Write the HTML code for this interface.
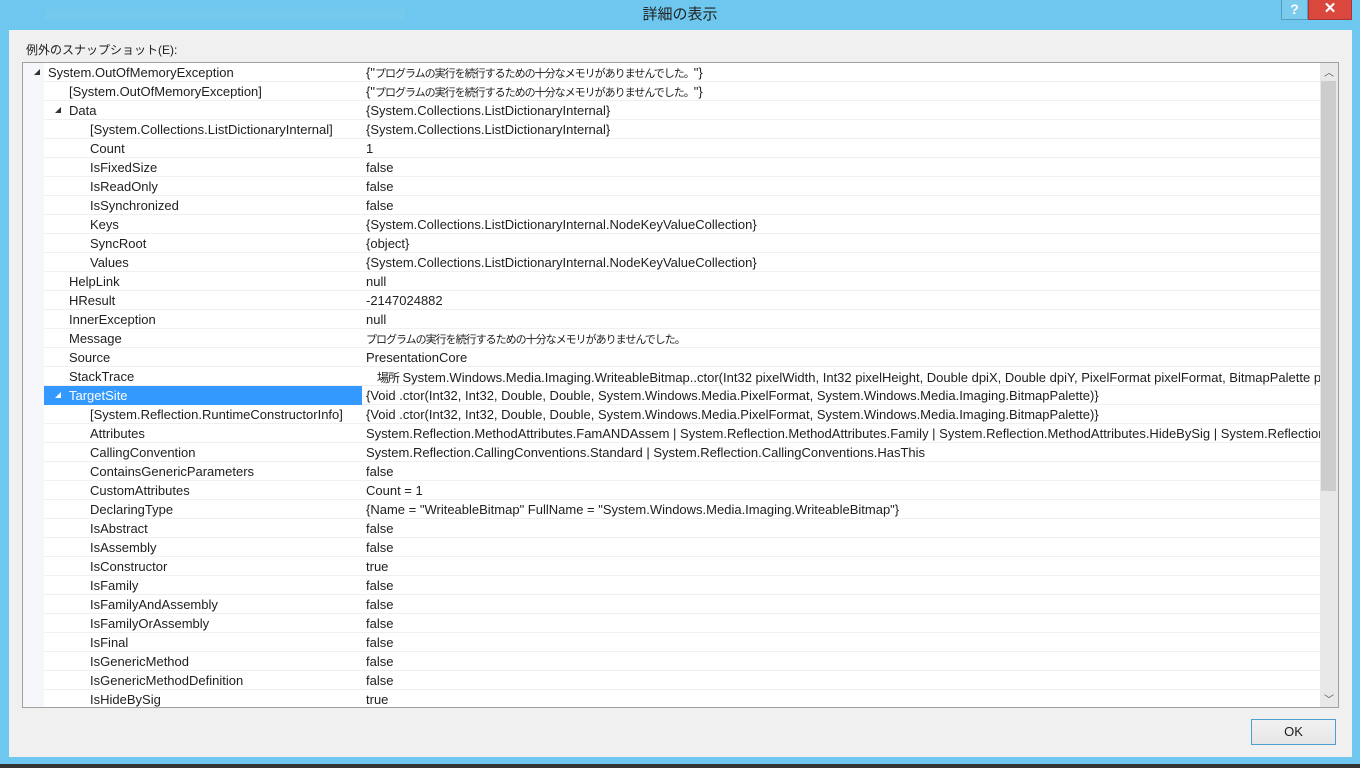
<!DOCTYPE html>
<html><head><meta charset="utf-8"><style>
*{margin:0;padding:0;box-sizing:border-box}
body{width:1360px;height:768px;overflow:hidden;background:#6dc7ee;font-family:"Liberation Sans","Noto Sans CJK JP",sans-serif;font-size:13px;color:#1e1e1e;position:relative}
.title{position:absolute;top:0;left:0;width:1360px;height:30px;text-align:center;line-height:30px;font-size:15px;color:#222}
.ghost{position:absolute;top:9px;left:45px;width:360px;height:12px;background:#7acbec;opacity:.6}
.help{position:absolute;left:1281px;top:0;width:27px;height:20px;background:#7ccbec;border:1px solid #4f9fc4;border-top:none;text-align:center;color:#fff;font-weight:bold;font-size:14px;line-height:18px}
.close{position:absolute;left:1308px;top:0;width:44px;height:20px;background:#d9473d;border:1px solid #a33;border-top:none;text-align:center;color:#fff;font-weight:bold;font-size:15px;line-height:18px}
.client{position:absolute;left:9px;top:30px;width:1343px;height:727px;background:#f0f0f0}
.lbl{position:absolute;left:26px;top:41px;font-size:12px}
.tree{position:absolute;left:22px;top:62px;width:1317px;height:646px;border:1px solid #a0a0a0;background:#fff;overflow:hidden}
.gut{position:absolute;left:0;top:0;width:21px;height:100%;background:#f5f7fa}
.row{position:absolute;left:21px;width:1276px;height:19px;border-bottom:1px solid #f0f0f0;white-space:nowrap}
.n{position:absolute;top:2px}
.v{position:absolute;left:322px;top:2px;width:954px;overflow:hidden}
.j{font-size:11px;letter-spacing:-1px}
.sel{position:absolute;left:0;top:0;width:318px;height:19px;background:#3399ff}
.tg{position:absolute;top:6px;width:0;height:0;border-left:6px solid transparent;border-bottom:6px solid #333}
.sb{position:absolute;left:1297px;top:0;width:18px;height:644px;background:#e8e8e8}
.thumb{position:absolute;left:1px;top:18px;width:15px;height:410px;background:#cdcdcd}
.ok{position:absolute;left:1251px;top:719px;width:85px;height:26px;border:1px solid #4ea0d0;background:linear-gradient(#f2f2f2,#e6e6e6);text-align:center;line-height:24px;font-size:13px}
.bot{position:absolute;left:0;top:764px;width:1360px;height:4px;background:#333}
</style></head><body>
<div class="ghost"></div>
<div class="title">詳細の表示</div>
<div class="help">?</div><div class="close">✕</div>
<div class="client"></div>
<div class="lbl">例外のスナップショット(E):</div>
<div class="tree">
<div class="gut"></div>
<div id="rows"></div>
<div class="sb"><div class="thumb"></div><div style="position:absolute;left:4px;top:1px;font-size:10px;color:#555">︿</div><div style="position:absolute;left:4px;top:628px;font-size:10px;color:#555">﹀</div></div>
</div>
<div class="ok">OK</div>
<div class="bot"></div>
<script>
var J='<span class="j">プログラムの実行を続行するための十分なメモリがありませんでした。</span>';
var d=[[0,1,"System.OutOfMemoryException","{\""+J+"\"}"],
[1,0,"[System.OutOfMemoryException]","{\""+J+"\"}"],
[1,1,"Data","{System.Collections.ListDictionaryInternal}"],
[2,0,"[System.Collections.ListDictionaryInternal]","{System.Collections.ListDictionaryInternal}"],
[2,0,"Count","1"],[2,0,"IsFixedSize","false"],[2,0,"IsReadOnly","false"],[2,0,"IsSynchronized","false"],
[2,0,"Keys","{System.Collections.ListDictionaryInternal.NodeKeyValueCollection}"],
[2,0,"SyncRoot","{object}"],
[2,0,"Values","{System.Collections.ListDictionaryInternal.NodeKeyValueCollection}"],
[1,0,"HelpLink","null"],[1,0,"HResult","-2147024882"],[1,0,"InnerException","null"],
[1,0,"Message",J],
[1,0,"Source","PresentationCore"],
[1,0,"StackTrace","&nbsp;&nbsp;&nbsp;<span class='j' style='font-size:12px'>場所</span> System.Windows.Media.Imaging.WriteableBitmap..ctor(Int32 pixelWidth, Int32 pixelHeight, Double dpiX, Double dpiY, PixelFormat pixelFormat, BitmapPalette palette)"],
[1,2,"TargetSite","{Void .ctor(Int32, Int32, Double, Double, System.Windows.Media.PixelFormat, System.Windows.Media.Imaging.BitmapPalette)}"],
[2,0,"[System.Reflection.RuntimeConstructorInfo]","{Void .ctor(Int32, Int32, Double, Double, System.Windows.Media.PixelFormat, System.Windows.Media.Imaging.BitmapPalette)}"],
[2,0,"Attributes","System.Reflection.MethodAttributes.FamANDAssem | System.Reflection.MethodAttributes.Family | System.Reflection.MethodAttributes.HideBySig | System.Reflection.MethodAttributes.SpecialName"],
[2,0,"CallingConvention","System.Reflection.CallingConventions.Standard | System.Reflection.CallingConventions.HasThis"],
[2,0,"ContainsGenericParameters","false"],[2,0,"CustomAttributes","Count = 1"],
[2,0,"DeclaringType","{Name = \"WriteableBitmap\" FullName = \"System.Windows.Media.Imaging.WriteableBitmap\"}"],
[2,0,"IsAbstract","false"],[2,0,"IsAssembly","false"],[2,0,"IsConstructor","true"],[2,0,"IsFamily","false"],
[2,0,"IsFamilyAndAssembly","false"],[2,0,"IsFamilyOrAssembly","false"],[2,0,"IsFinal","false"],
[2,0,"IsGenericMethod","false"],[2,0,"IsGenericMethodDefinition","false"],[2,0,"IsHideBySig","true"]];
var h="";
d.forEach(function(r,i){
 var x=4+r[0]*21;
 h+='<div class="row" style="top:'+(i*19)+'px">';
 if(r[1]==2)h+='<div class="sel"></div>';
 if(r[1])h+='<div class="tg" style="left:'+(x-14)+'px;'+(r[1]==2?'border-bottom-color:#fff':'')+'"></div>';
 h+='<div class="n" style="left:'+x+'px;'+(r[1]==2?'color:#fff':'')+'">'+r[2]+'</div><div class="v">'+r[3]+'</div></div>';
});
document.getElementById("rows").innerHTML=h;
</script>
</body></html>
